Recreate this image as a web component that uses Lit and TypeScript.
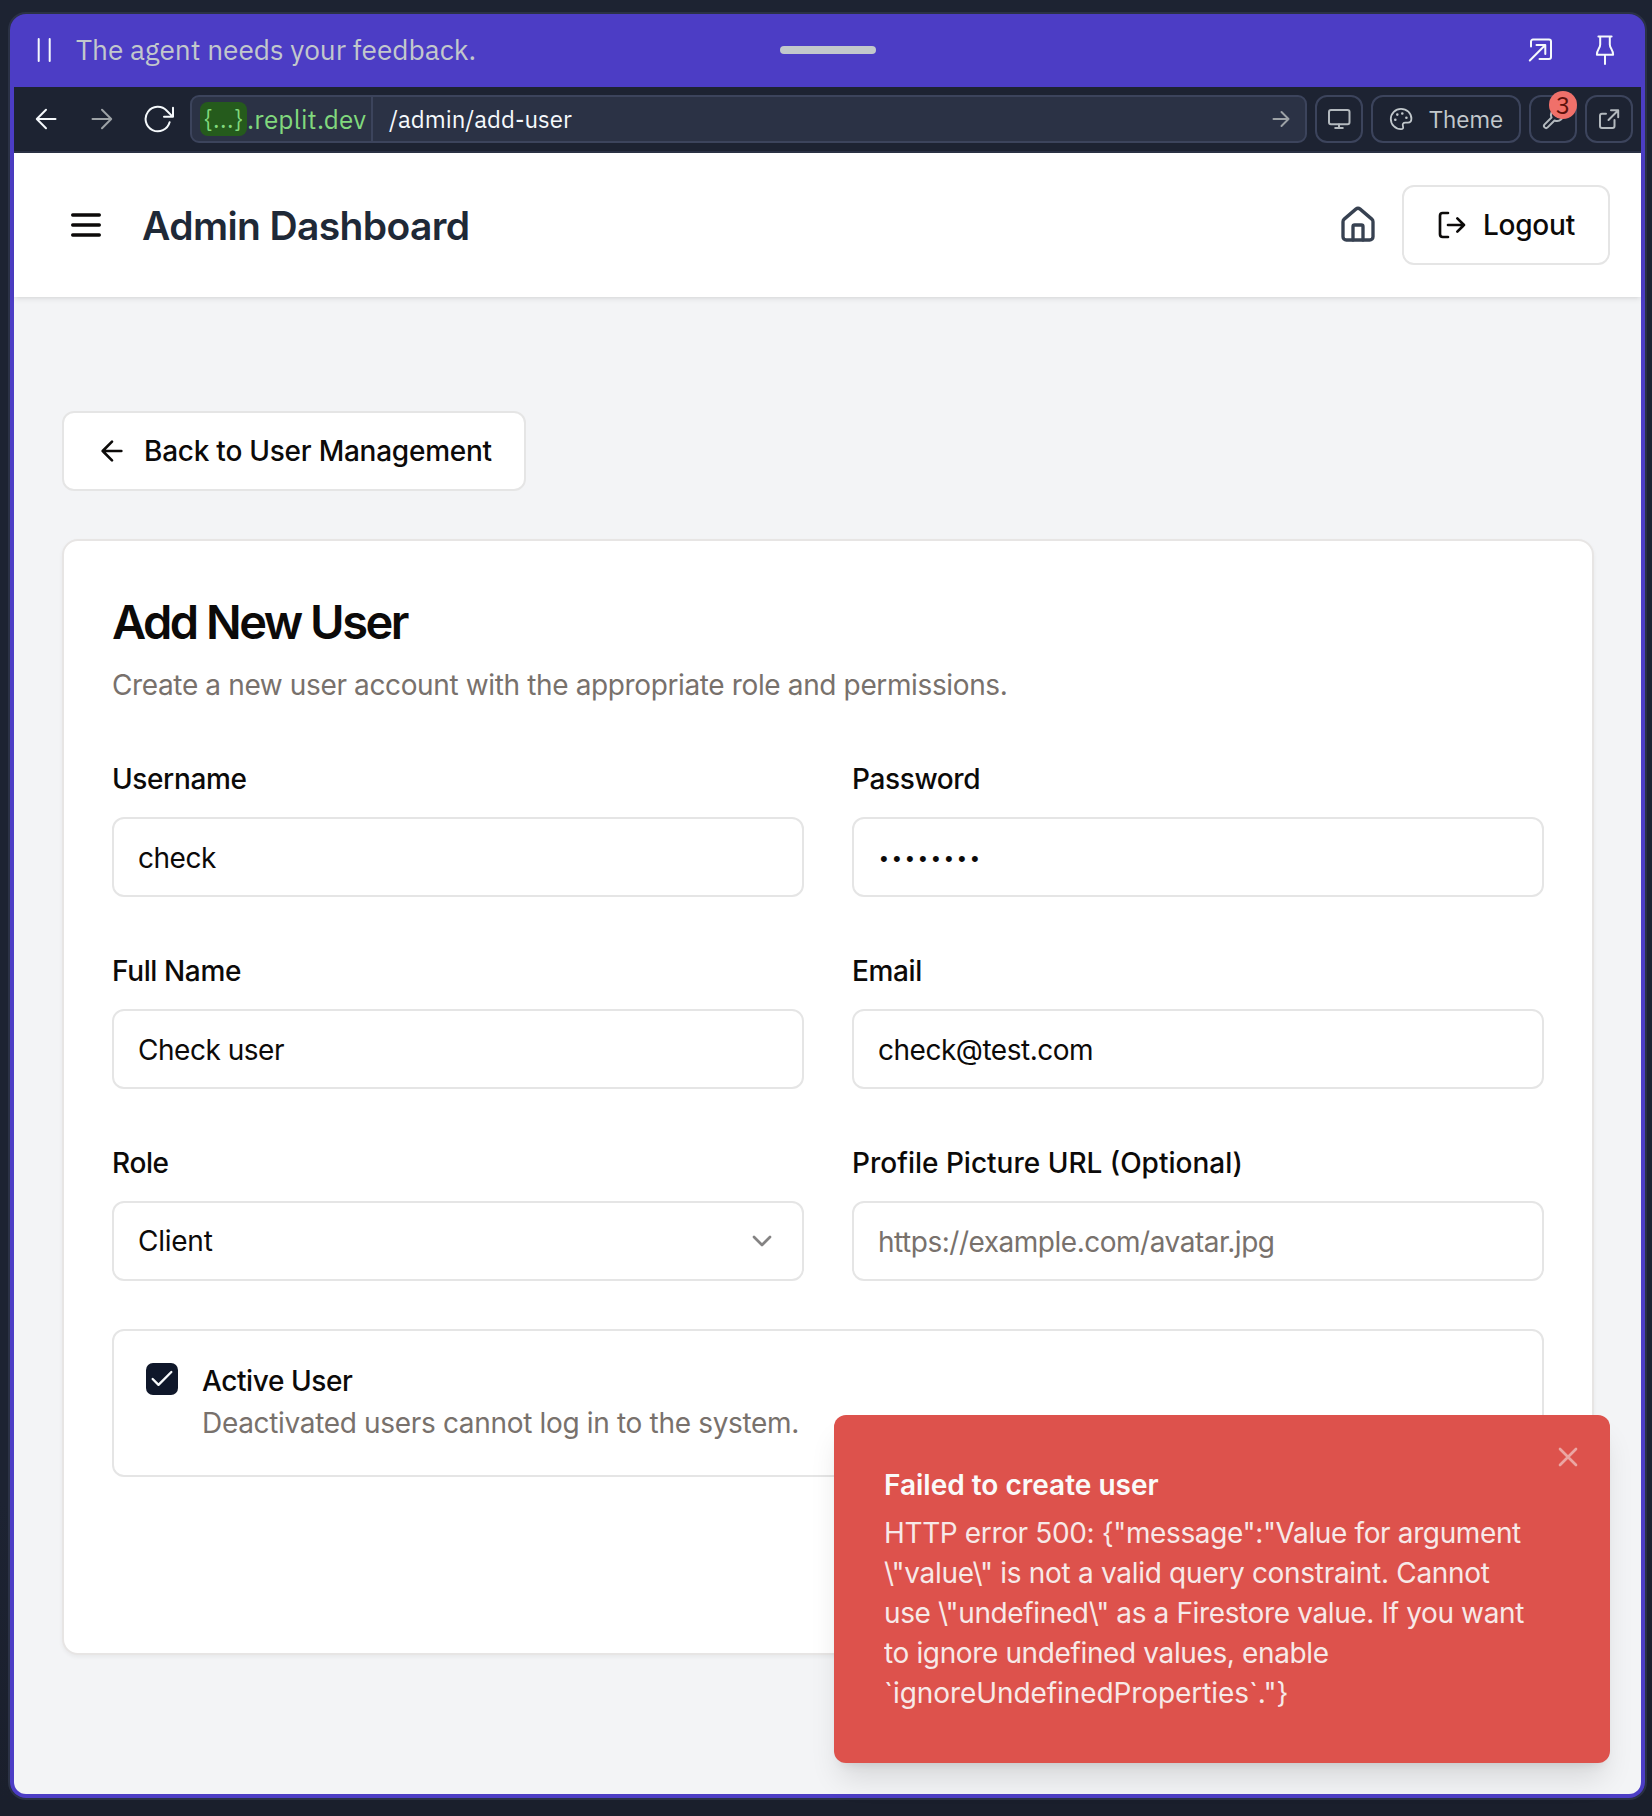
import { LitElement, html, css, svg, nothing } from "lit";
import { customElement, property } from "lit/decorators.js";

const lucide: Record<string, unknown> = {
  menu: svg`<path d="M4 6h16M4 12h16M4 18h16"/>`,
  home: svg`<path d="M15 21v-8a1 1 0 0 0-1-1h-4a1 1 0 0 0-1 1v8"/><path d="M3 10a2 2 0 0 1 .709-1.528l7-5.999a2 2 0 0 1 2.582 0l7 5.999A2 2 0 0 1 21 10v9a2 2 0 0 1-2 2H5a2 2 0 0 1-2-2z"/>`,
  logout: svg`<path d="M9 21H5a2 2 0 0 1-2-2V5a2 2 0 0 1 2-2h4"/><path d="m16 17 5-5-5-5M21 12H9"/>`,
  back: svg`<path d="m12 19-7-7 7-7M19 12H5"/>`,
  chevron: svg`<path d="m6 9 6 6 6-6"/>`,
  check: svg`<path d="M20 6 9 17l-5-5"/>`,
  close: svg`<path d="M18 6 6 18M6 6l12 12"/>`,
};

@customElement("line-icon")
export class LineIcon extends LitElement {
  @property() name = "menu";
  static styles = css`
    :host { display: block; flex: none; }
    svg { display: block; width: 100%; height: 100%; fill: none; stroke: currentColor; stroke-width: 2; stroke-linecap: round; stroke-linejoin: round; }
  `;
  render() {
    return html`<svg viewBox="0 0 24 24">${lucide[this.name]}</svg>`;
  }
}

interface Field {
  label: string;
  value: string;
  kind: "text" | "password" | "select" | "placeholder";
}

const fields: Field[] = [
  { label: "Username", value: "check", kind: "text" },
  { label: "Password", value: "••••••••", kind: "password" },
  { label: "Full Name", value: "Check user", kind: "text" },
  { label: "Email", value: "check@test.com", kind: "text" },
  { label: "Role", value: "Client", kind: "select" },
  { label: "Profile Picture URL (Optional)", value: "https://example.com/avatar.jpg", kind: "placeholder" },
];

const errorLines = [
  'HTTP error 500: {"message":"Value for argument',
  '\\"value\\" is not a valid query constraint. Cannot',
  'use \\"undefined\\" as a Firestore value. If you want',
  "to ignore undefined values, enable",
  '`ignoreUndefinedProperties`."}',
];

@customElement("app-root")
export class AppRoot extends LitElement {
  static styles = css`
    :host {
      display: block;
      box-sizing: border-box;
      height: 1816px;
      padding: 12px 5px 16px 8px;
      background: linear-gradient(#1d2332 0, #1d2332 1500px, #1a1f2c 1800px);
      font-family: Inter, "Liberation Sans", sans-serif;
      font-size: 28px;
      letter-spacing: -0.37px;
      color: #0c0a09;
    }
    * { box-sizing: border-box; }
    svg { display: block; flex: none; fill: none; stroke: currentColor; stroke-width: 2; stroke-linecap: round; stroke-linejoin: round; }
    .frame { height: 1788px; border: 2px solid #2b3245; border-radius: 18px; }
    .window { height: 1784px; display: flex; flex-direction: column; padding: 0 4px 4px; background: #4c3dc5; border-radius: 16px; }

    .agent { flex: none; height: 73px; display: grid; grid-template-columns: 1fr auto 1fr; align-items: center; padding: 0 22px 1px; color: #f5f9fc; }
    .agent-left { display: flex; align-items: center; gap: 24px; }
    .agent-text { font: 400 28px/40px "IBM Plex Sans", "Open Sans", sans-serif; letter-spacing: 0; color: #c2c8cc; white-space: nowrap; }
    .grip { width: 96px; height: 8px; border-radius: 4px; background: #c2c8cc; }
    .agent-right { display: flex; align-items: center; justify-content: flex-end; gap: 41px; padding-right: 4px; }

    .nav { flex: none; height: 66px; display: flex; align-items: center; padding: 0 8px 0 18px; background: #1d2332; border-bottom: 2px solid #2b3245; color: #f5f9fc; gap: 8px; }
    .nav-icons { display: flex; align-items: center; gap: 28px; margin-right: 6px; }
    .dim { color: #9da2a6; }
    .url { flex: 1; height: 48px; display: flex; align-items: center; border: 2px solid #3c445c; border-radius: 9px; background: #2b3245; font: 400 24px/34px "IBM Plex Sans", "Open Sans", sans-serif; padding-left: 8px; }
    .host-pill { width: 47px; height: 34px; border-radius: 8px; background: #255b1c; color: #81d97d; text-align: center; letter-spacing: 0.4px; }
    .host-name { width: 126px; height: 44px; line-height: 44px; border-right: 2px solid #3c445c; color: #81d97d; font-size: 26px; letter-spacing: 0.2px; }
    .path { flex: 1; padding-left: 16px; letter-spacing: 0; color: #f5f9fc; }
    .go { margin-right: 14px; color: #9da2a6; }
    .tool { position: relative; flex: none; width: 48px; height: 48px; display: flex; align-items: center; justify-content: center; border: 2px solid #3c445c; border-radius: 12px; color: #b3b9be; }
    .theme { width: 150px; justify-content: flex-start; padding-left: 16px; gap: 16px; font: 400 24px/34px "IBM Plex Sans", "Open Sans", sans-serif; letter-spacing: -0.1px; color: #c2c8cc; }
    .badge { position: absolute; left: 18px; top: -6px; width: 28px; height: 28px; border-radius: 50%; background: #f0706a; color: #5c110c; font: 400 25px/28px "IBM Plex Sans", "Open Sans", sans-serif; letter-spacing: 0; text-align: center; }

    .page { position: relative; flex: 1; display: flex; flex-direction: column; background: #f3f4f6; border-radius: 0 0 12px 12px; }
    .header { flex: none; height: 144px; display: flex; align-items: center; padding: 0 31px 0 52px; background: #fff; box-shadow: 0 2px 6px rgba(0, 0, 0, 0.08), 0 2px 4px -2px rgba(0, 0, 0, 0.08); }
    .i40 { width: 40px; height: 40px; }
    .i32 { width: 32px; height: 32px; }
    .title { flex: 1; margin: 2px 0 0 36px; font-size: 39px; line-height: 56px; font-weight: 600; letter-spacing: -0.62px; color: #1f2937; }
    .home { color: #374151; margin-right: 24px; }
    .button { display: flex; align-items: center; gap: 16px; height: 80px; padding: 0 32px; border: 2px solid #e5e5e5; border-radius: 12px; background: #fff; font-weight: 500; letter-spacing: -0.24px; white-space: nowrap; }
    .logout { width: 208px; gap: 15px; }
    .body { padding: 114px 47px 0 48px; }
    .back { width: 464px; }
    .card { margin-top: 48px; height: 1116px; padding: 49px 48px 0; border: 2px solid #e7e5e4; border-radius: 16px; background: #fff; box-shadow: 0 2px 4px rgba(0, 0, 0, 0.05); }
    .card-title { margin: 0; font-size: 47px; line-height: 64px; font-weight: 600; letter-spacing: -2.5px; }
    .muted { margin: 0; line-height: 40px; color: #78716c; }
    .lead { margin-top: 11px; }
    .fields { display: grid; grid-template-columns: 1fr 1fr; gap: 60px 48px; margin-top: 60px; }
    .label { line-height: 28px; font-weight: 500; letter-spacing: -0.38px; }
    .label-placeholder { letter-spacing: 0; }
    .input { height: 80px; margin-top: 24px; display: flex; align-items: center; justify-content: space-between; padding: 2px 24px 0; border: 2px solid #e5e5e5; border-radius: 12px; line-height: 40px; letter-spacing: -0.48px; }
    .select { padding-top: 0; letter-spacing: -0.25px; }
    .placeholder { color: #78716c; }
    .password { font-family: "Liberation Sans", sans-serif; font-size: 22px; letter-spacing: 5.3px; padding-left: 26px; padding-top: 4px; }
    .chevron { opacity: 0.5; }
    .active { display: flex; gap: 24px; height: 148px; margin-top: 48px; padding: 32px; border: 2px solid #e5e5e5; border-radius: 12px; }
    .box { flex: none; width: 32px; height: 32px; display: flex; align-items: center; justify-content: center; border-radius: 7px; background: #0f172a; color: #f8fafc; }
    .i28 { width: 28px; height: 28px; }
    .active-label { margin: 4px 0 8px; line-height: 28px; font-weight: 500; letter-spacing: -0.4px; }
    .active .muted { letter-spacing: -0.33px; }

    .toast { position: absolute; right: 31px; bottom: 31px; width: 776px; height: 348px; padding: 50px; border-radius: 12px; background: #dd524c; color: #fafaf9; box-shadow: 0 20px 30px -6px rgba(0, 0, 0, 0.12), 0 8px 12px -8px rgba(0, 0, 0, 0.12); }
    .toast-title { line-height: 40px; font-weight: 600; letter-spacing: 0; margin-bottom: 8px; }
    .toast-line { line-height: 40px; opacity: 0.9; white-space: nowrap; }
    .toast-line:nth-child(3) { letter-spacing: -0.3px; }
    .toast-line:nth-child(6) { letter-spacing: -0.08px; }
    .close { position: absolute; right: 26px; top: 26px; opacity: 0.5; }
  `;

  private field(f: Field) {
    return html`<div>
      <div class="label label-${f.kind}">${f.label}</div>
      <div class="input ${f.kind}">
        <span>${f.value}</span>
        ${f.kind === "select" ? html`<line-icon class="i32 chevron" name="chevron"></line-icon>` : nothing}
      </div>
    </div>`;
  }

  render() {
    return html`<div class="frame"><div class="window">
      <div class="agent">
        <div class="agent-left">
          <svg width="16" height="26" viewBox="0 0 16 26"><path d="M2.7 2V24M13.7 2V24"/></svg>
          <span class="agent-text">The agent needs your feedback.</span>
        </div>
        <div class="grip"></div>
        <div class="agent-right">
          <svg width="26" height="26" viewBox="0 0 26 26"><path d="M3 9.5V4.5a2 2 0 0 1 2-2H21a2 2 0 0 1 2 2V20a2 2 0 0 1-2 2H11.5M1.8 23.5 17.3 8M8.5 8H17.3V17"/></svg>
          <svg width="20" height="32" viewBox="0 0 20 32"><path d="M3.4 2.6H16.6M5.2 2.6V10.5C5.2 14.5 1.9 15.5 1.9 20.8H18.1C18.1 15.5 14.8 14.5 14.8 10.5V2.6M10 20.8V30"/></svg>
        </div>
      </div>
      <div class="nav">
        <div class="nav-icons">
          <svg width="28" height="28" viewBox="0 0 28 28"><path d="M5 14H23.5M14 4.8 4.8 14 14 23.2"/></svg>
          <svg class="dim" width="28" height="28" viewBox="0 0 28 28"><path d="M4.5 14H23M14 4.8 23.2 14 14 23.2"/></svg>
          <svg width="32" height="32" viewBox="0 0 32 32"><path d="M25.6 19.2A12.2 12.2 0 1 1 22.8 7.8L28.4 13.4M29 4.8V13.7H20"/></svg>
        </div>
        <div class="url">
          <span class="host-pill">{...}</span><span class="host-name">.replit.dev</span>
          <span class="path">/admin/add-user</span>
          <svg class="go" width="20" height="20" viewBox="0 0 20 20" stroke-width="1.6"><path d="M2.5 10H17.5M10.5 3 17.5 10 10.5 17"/></svg>
        </div>
        <div class="tool"><svg width="24" height="24" viewBox="0 0 24 24"><rect x="2" y="3" width="20.5" height="14.2" rx="2"/><path d="M12 17.5V21M8.2 21H15.8"/></svg></div>
        <div class="tool theme"><svg width="24" height="24" viewBox="0 0 24 24"><path d="M12 1.8a10.2 10.2 0 0 0 0 20.4c1.8 0 2.6-1 2-2.7-.8-2.4.1-3.9 2.4-3.9h2.5c2.2 0 3.5-1.6 3.5-3.9C22.4 6.1 17.8 1.8 12 1.8z" stroke-width="1.8"/><path d="M6.3 12.7h.01M8.3 7.6h.01M13.3 6.5h.01M17.4 10.7h.01" stroke-width="2.6"/></svg><span>Theme</span></div>
        <div class="tool">
          <svg width="24" height="24" viewBox="0 0 24 24"><path d="M14.7 6.3a1 1 0 0 0 0 1.4l1.6 1.6a1 1 0 0 0 1.4 0l3.77-3.77a6 6 0 0 1-7.94 7.94l-6.91 6.91a2.12 2.12 0 0 1-3-3l6.91-6.91a6 6 0 0 1 7.94-7.94l-3.76 3.76z"/></svg>
          <span class="badge">3</span>
        </div>
        <div class="tool"><svg width="24" height="24" viewBox="0 0 24 24"><path d="M9 6.7H5a2 2 0 0 0-2 2V19a2 2 0 0 0 2 2H15.5a2 2 0 0 0 2-2V13M11.5 13 21 3.5M14 3.2H21.2V10.2"/></svg></div>
      </div>
      <div class="page">
        <div class="header">
          <line-icon class="i40" name="menu"></line-icon>
          <h1 class="title">Admin Dashboard</h1>
          <line-icon class="i40 home" name="home"></line-icon>
          <div class="button logout"><line-icon class="i32" name="logout"></line-icon>Logout</div>
        </div>
        <div class="body">
          <div class="button back"><line-icon class="i32" name="back"></line-icon>Back to User Management</div>
          <div class="card">
            <h2 class="card-title">Add New User</h2>
            <p class="muted lead">Create a new user account with the appropriate role and permissions.</p>
            <div class="fields">${fields.map((f) => this.field(f))}</div>
            <div class="active">
              <div class="box"><line-icon class="i28" name="check"></line-icon></div>
              <div>
                <div class="active-label">Active User</div>
                <p class="muted">Deactivated users cannot log in to the system.</p>
              </div>
            </div>
          </div>
        </div>
        <div class="toast">
          <div class="toast-title">Failed to create user</div>
          ${errorLines.map((l) => html`<div class="toast-line">${l}</div>`)}
          <line-icon class="i32 close" name="close"></line-icon>
        </div>
      </div>
    </div></div>`;
  }
}
